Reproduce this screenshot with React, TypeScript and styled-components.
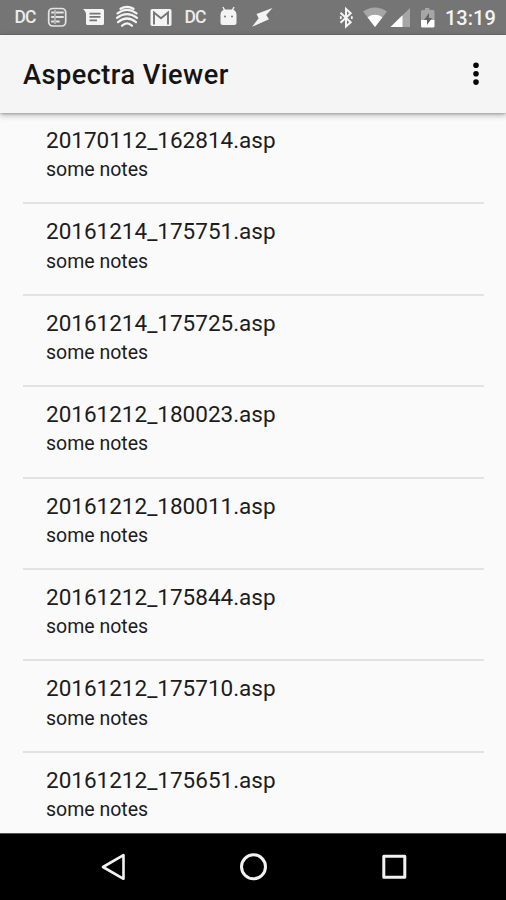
import React from "react";
import styled, { createGlobalStyle } from "styled-components";

const GlobalStyle = createGlobalStyle`
  * { box-sizing: border-box; }
  body { margin: 0; background: #fafafa; font-family: Roboto, sans-serif; }
`;

const Screen = styled.div`
  width: 506px;
  height: 900px;
  display: flex;
  flex-direction: column;
  overflow: hidden;
  background: #fafafa;
`;

const StatusBar = styled.div`
  flex: 0 0 34px;
  display: flex;
  justify-content: space-between;
  padding: 0 11px 0 8px;
  background: #757575;
  border-bottom: 1px solid #6b6b6b;
  color: #f4f4f4;
`;

const StatusGroup = styled.div`
  display: flex;
  height: 34px;
`;

const StatusIcon = styled.svg<{ $width?: number }>`
  display: block;
  flex: none;
  width: ${(p) => p.$width ?? 34}px;
  height: 34px;
`;

const Monogram = styled.span`
  width: 34px;
  text-align: center;
  font-size: 17.5px;
  font-weight: 500;
  line-height: 34px;
  letter-spacing: -1px;
  color: #ececec;
`;

const Clock = styled.span`
  width: 50px;
  font-size: 20px;
  font-weight: 500;
  line-height: 36px;
  white-space: nowrap;
`;

const AppBar = styled.header`
  position: relative;
  flex: 0 0 78px;
  display: flex;
  align-items: center;
  justify-content: space-between;
  padding: 0 18px 0 23px;
  background: #f5f5f5;
  box-shadow: 0 2px 6px rgba(0, 0, 0, 0.3), 0 1px 2px rgba(0, 0, 0, 0.16);
`;

const Title = styled.h1`
  margin: 2px 0 0;
  font-size: 27.2px;
  font-weight: 500;
  line-height: 32px;
  letter-spacing: 0.45px;
  color: #141414;
`;

const MenuButton = styled.button`
  width: 24px;
  height: 40px;
  padding: 0;
  border: 0;
  background: none;

  svg { display: block; }
`;

const FileList = styled.ul`
  flex: 1;
  min-height: 0;
  margin: 0;
  padding: 0 22px 0 23px;
  overflow: hidden;
  list-style: none;
`;

const FileRow = styled.li`
  height: 91.4px;
  padding: 13px 23px 0;
  border-bottom: 2px solid #e2e2e2;
`;

const FileName = styled.div`
  font-size: 22.5px;
  line-height: 28px;
  color: #1c1c1c;
`;

const FileNotes = styled.div`
  margin-top: 3.2px;
  font-size: 19.5px;
  line-height: 26px;
  color: #1c1c1c;
`;

const NavBar = styled.nav`
  flex: 0 0 67px;
  display: flex;
  justify-content: center;
  gap: 100px;
  padding-top: 14px;
  background: #000;
  border-top: 1px solid #555;
`;

const NavIcon = styled.svg`
  display: block;
  width: 40px;
  height: 40px;
  fill: none;
  stroke: #f2f2f2;
  stroke-width: 3;
  stroke-linejoin: round;
`;

const files = [
  "20170112_162814.asp",
  "20161214_175751.asp",
  "20161214_175725.asp",
  "20161212_180023.asp",
  "20161212_180011.asp",
  "20161212_175844.asp",
  "20161212_175710.asp",
  "20161212_175651.asp",
];

const Notifications = () => (
  <StatusGroup>
    <Monogram>DC</Monogram>
    <StatusIcon viewBox="0 0 34 34" fill="none" stroke="#e4e4e4">
      <rect x="6.700" y="8.500" width="17" height="17.500" rx="4" strokeWidth="1.700" />
      <path d="M9.200 12.500h3M13.700 12.500h8M9.200 17h3M13.700 17h8M9.200 21.500h3M13.700 21.500h4" strokeWidth="2" />
      <path d="M13 10v14" strokeWidth="1" />
    </StatusIcon>
    <StatusIcon viewBox="0 0 34 34" fill="#f4f4f4">
      <path fillRule="evenodd" d="M7 9h19.500q1.500 0 1.500 1.500v13q0 1.500-1.500 1.500H11.500q-1.500 0-1.500-1.500V13.500Q10 11.500 7 9zm6.500 3.700v1.700h11v-1.700zm0 3.400v1.700h11v-1.700zm0 3.400v1.700h7.500v-1.700z" />
    </StatusIcon>
    <StatusIcon viewBox="0 0 34 34" fill="none" stroke="#f4f4f4" strokeWidth="2.200" strokeLinecap="round">
      <path d="M10.500 8.800Q17 4.800 23.500 8.800M7.500 13.400Q17 6.200 26.500 13.400M7 17.800Q17 10.400 27 17.800M8 22.200Q17 14.800 26 22.200M12 25.800Q17 20.800 22 25.800" />
    </StatusIcon>
    <StatusIcon viewBox="0 0 34 34">
      <rect x="6.500" y="9" width="21" height="17" rx="1.800" fill="#f4f4f4" />
      <path d="M10 24.500V12.500l7 5.800 7-5.800V24.500" fill="none" stroke="#757575" strokeWidth="1.900" />
    </StatusIcon>
    <Monogram>DC</Monogram>
    <StatusIcon viewBox="0 0 34 34">
      <path d="M11 7l2 4M22 7l-2 4" stroke="#f4f4f4" strokeWidth="1.400" />
      <path d="M8.500 14.500Q9 9.500 14 9.500h5q5 0 5.500 5v8q0 2.500-2.500 2.500H11q-2.500 0-2.500-2.500z" fill="#f4f4f4" />
      <circle cx="13" cy="16.500" r="1" fill="#757575" />
      <circle cx="20" cy="16.500" r="1" fill="#757575" />
    </StatusIcon>
    <StatusIcon viewBox="0 0 34 34">
      <path d="M26.500 8L10.500 14l2.200 4.300-6.700 8.500 17-7.500-2.800-4.300z" fill="#f4f4f4" />
    </StatusIcon>
  </StatusGroup>
);

const SystemStatus = () => (
  <StatusGroup>
    <StatusIcon $width={26} viewBox="0 0 26 34" fill="none" stroke="#f4f4f4" strokeWidth="2">
      <path d="M5.500 12.800l10.200 9.400-4.700 4.300V9l4.700 4.300L5.500 22.800" />
      <path d="M5.800 16.300v2.800M16.800 16.300v2.800" strokeWidth="1.800" />
    </StatusIcon>
    <StatusIcon $width={28} viewBox="0 0 28 34">
      <path d="M2 11.500Q14 3.500 26 11.500L14 27z" fill="#a6a6a6" />
      <path d="M6.500 17.200Q14 12.500 21.500 17.200L14 27z" fill="#fff" />
    </StatusIcon>
    <StatusIcon $width={28} viewBox="0 0 28 34">
      <path d="M21 8v19H1.500z" fill="#a6a6a6" />
      <path d="M13.500 15.300V27h-12z" fill="#fff" />
    </StatusIcon>
    <StatusIcon $width={28} viewBox="0 0 28 34">
      <path d="M8 8h4.500v2H16q1.500 0 1.500 1.500V20H4v-8.500Q4 10 5.500 10H8z" fill="#a6a6a6" />
      <path d="M4 20h13.500v6q0 1.500-1.500 1.500H5.500Q4 27.500 4 26z" fill="#fff" />
      <path d="M12 13l-5 7h3v5l5-7h-3z" fill="#626262" />
    </StatusIcon>
    <Clock>13:19</Clock>
  </StatusGroup>
);

export default function App() {
  return (
    <Screen>
      <GlobalStyle />
      <StatusBar>
        <Notifications />
        <SystemStatus />
      </StatusBar>
      <AppBar>
        <Title>Aspectra Viewer</Title>
        <MenuButton aria-label="More options">
          <svg width="24" height="40" viewBox="0 0 24 40" fill="#080808">
            <circle cx="12" cy="11.300" r="2.800" />
            <circle cx="12" cy="19.700" r="2.800" />
            <circle cx="12" cy="28.100" r="2.800" />
          </svg>
        </MenuButton>
      </AppBar>
      <FileList>
        {files.map((name) => (
          <FileRow key={name}>
            <FileName>{name}</FileName>
            <FileNotes>some notes</FileNotes>
          </FileRow>
        ))}
      </FileList>
      <NavBar>
        <NavIcon viewBox="0 0 40 40">
          <path d="M10 19L30.500 7.200v23.600z" strokeWidth="2.600" />
        </NavIcon>
        <NavIcon viewBox="0 0 40 40">
          <circle cx="20.500" cy="18.800" r="12" />
        </NavIcon>
        <NavIcon viewBox="0 0 40 40">
          <rect x="10.800" y="8.300" width="21" height="21" />
        </NavIcon>
      </NavBar>
    </Screen>
  );
}
